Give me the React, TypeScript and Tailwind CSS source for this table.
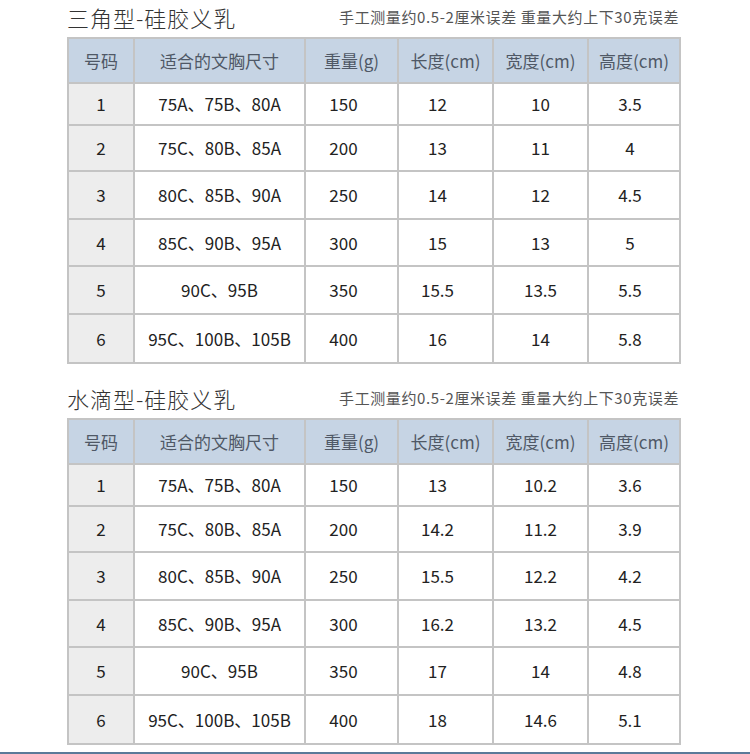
import React from 'react';

type Row = [string, string, string, string, string, string];

const triangleRows: Row[] = [
  ['1', '75A、75B、80A', '150', '12', '10', '3.5'],
  ['2', '75C、80B、85A', '200', '13', '11', '4'],
  ['3', '80C、85B、90A', '250', '14', '12', '4.5'],
  ['4', '85C、90B、95A', '300', '15', '13', '5'],
  ['5', '90C、95B', '350', '15.5', '13.5', '5.5'],
  ['6', '95C、100B、105B', '400', '16', '14', '5.8'],
];

const dropRows: Row[] = [
  ['1', '75A、75B、80A', '150', '13', '10.2', '3.6'],
  ['2', '75C、80B、85A', '200', '14.2', '11.2', '3.9'],
  ['3', '80C、85B、90A', '250', '15.5', '12.2', '4.2'],
  ['4', '85C、90B、95A', '300', '16.2', '13.2', '4.5'],
  ['5', '90C、95B', '350', '17', '14', '4.8'],
  ['6', '95C、100B、105B', '400', '18', '14.6', '5.1'],
];

const headers = ['号码', '适合的文胸尺寸', '重量(g)', '长度(cm)', '宽度(cm)', '高度(cm)'];
const widths = ['w-[66px]', 'w-[171px]', 'w-[93px]', 'w-[95px]', 'w-[95px]', 'w-[92px]'];
const rowHeights = ['h-[42px]', 'h-[46px]', 'h-[48px]', 'h-[47px]', 'h-[48px]', 'h-[49px]'];

function SizeTable({ title, rows }: { title: string; rows: Row[] }) {
  return (
    <div>
      <div className="flex items-center justify-between h-[37px] pb-[2px]">
        <span className="text-[22px] font-light tracking-[1px] text-[#333]">{title}</span>
        <span className="text-[15px] tracking-[0.6px] text-[#555]">手工测量约0.5-2厘米误差 重量大约上下30克误差</span>
      </div>
      <table className="table-fixed border-collapse w-[612px] border-2 border-[#c4c4c4]">
        <colgroup>
          {widths.map((w, i) => <col key={i} className={w} />)}
        </colgroup>
        <thead>
          <tr className="h-[45px] bg-[#c6d4e4]">
            {headers.map(h => (
              <th key={h} className="border-2 border-[#c4c4c4] font-normal text-[17px] text-[#4f5866] text-center">
                {h}
              </th>
            ))}
          </tr>
        </thead>
        <tbody>
          {rows.map((r, i) => (
            <tr key={r[0]} className={rowHeights[i]}>
              <td className="border-2 border-[#c4c4c4] bg-[#ededed] text-center text-[17px] text-[#222]">{r[0]}</td>
              <td className="border-2 border-[#c4c4c4] text-center text-[17px] text-[#222]">{r[1]}</td>
              <td className="border-2 border-[#c4c4c4] text-center text-[17px] text-[#222] pr-4">{r[2]}</td>
              <td className="border-2 border-[#c4c4c4] text-center text-[17px] text-[#222] pr-4">{r[3]}</td>
              <td className="border-2 border-[#c4c4c4] text-center text-[17px] text-[#222]">{r[4]}</td>
              <td className="border-2 border-[#c4c4c4] text-center text-[17px] text-[#222] pr-2">{r[5]}</td>
            </tr>
          ))}
        </tbody>
      </table>
    </div>
  );
}

export default function App() {
  return (
    <div
      className="w-[750px] h-[754px] bg-white flex flex-col"
      style={{ fontFamily: '"Noto Sans CJK SC", "Noto Sans", sans-serif' }}
    >
      <div className="pl-[67px] pr-[71px] flex flex-col gap-[17px]">
        <SizeTable title="三角型-硅胶义乳" rows={triangleRows} />
        <SizeTable title="水滴型-硅胶义乳" rows={dropRows} />
      </div>
      <div className="flex-1" />
      <div className="h-[2px] bg-[#5b7a99]" />
    </div>
  );
}
